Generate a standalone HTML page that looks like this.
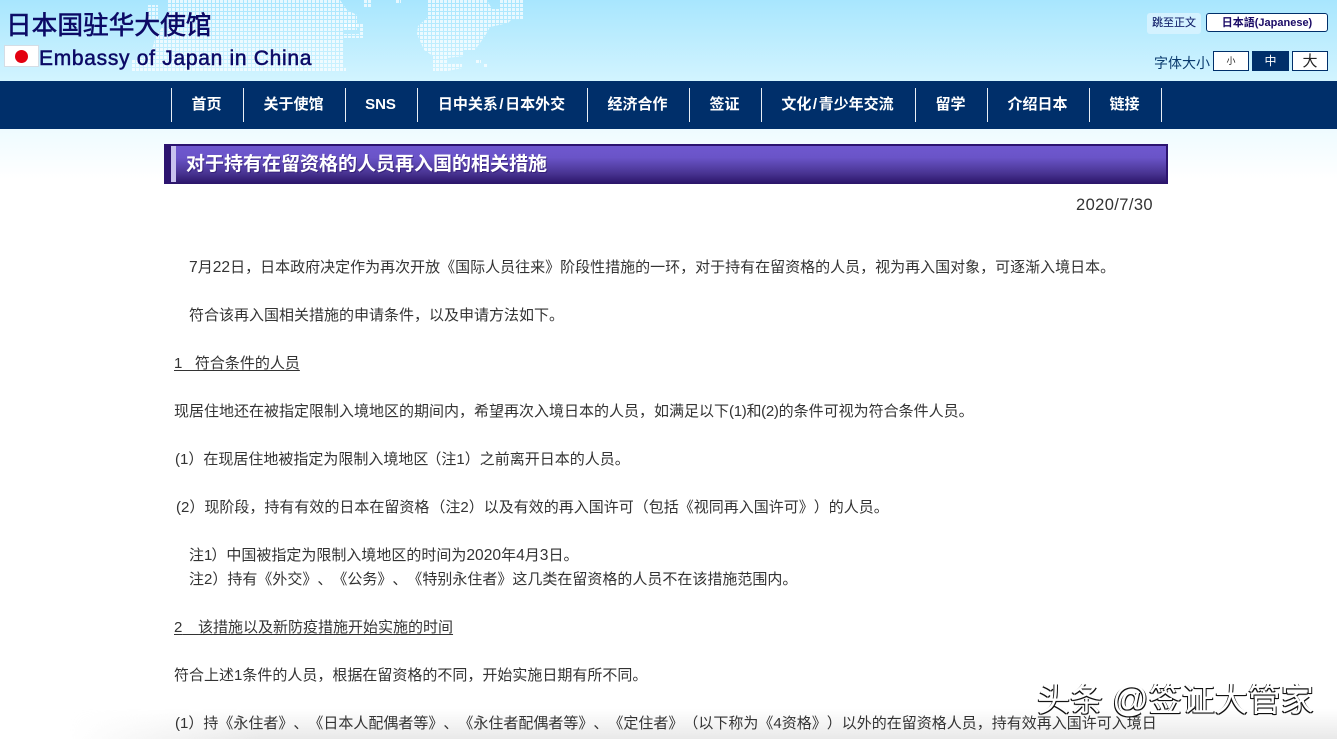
<!DOCTYPE html>
<html lang="zh"><head><meta charset="utf-8"><title>对于持有在留资格的人员再入国的相关措施</title>
<style>
html,body{margin:0;padding:0;background:#fff}
body{position:relative;width:1337px;height:739px;overflow:hidden;font-family:"Liberation Sans","Noto Sans CJK SC",sans-serif;color:#333;text-spacing-trim:space-all;font-feature-settings:"chws" 0}
.a{position:absolute;white-space:nowrap}
#hd{left:0;top:0;width:1337px;height:81px;background:linear-gradient(#a8e6fe,#d2f4ff)}
#nav{left:0;top:81px;width:1337px;height:48px;background:#002f6a}
#nav i{position:absolute;top:7px;width:1px;height:34px;background:#e8eef5}
#nav b{position:absolute;top:13px;height:22px;line-height:22px;color:#fff;font-size:15px;font-weight:bold;text-align:center;white-space:nowrap}
#nav u{text-decoration:none;padding:0 1.5px}
#fade{left:0;top:129px;width:1337px;height:50px;background:linear-gradient(#eefbff,#fff)}
.t{left:174px;font-size:15px;line-height:24px;height:24px;color:#333}
.u{text-decoration:underline;text-underline-offset:2px}
.o{padding-left:1px}
.d{font-size:15.6px}
.btn{background:#fff;border:1px solid #002f6a;box-sizing:border-box;text-align:center}
</style></head><body>
<div class="a" id="hd"></div>
<svg class="a" style="left:0;top:0" width="1337" height="81" viewBox="0 0 1337 81">
<defs><pattern id="d" width="4" height="4" patternUnits="userSpaceOnUse"><rect width="3" height="3" fill="#fff" fill-opacity=".72"/></pattern></defs>
<path fill="url(#d)" d="M167 0H340L347 10L357 15V30H343V68H346V71H132V60L150 56L156 36L166 22L167 12Z"/>
<path fill="url(#d)" d="M147 5H158V20H147Z"/>
<path fill="url(#d)" d="M344 23H363V38H344V34H359V28H344Z"/>
<path fill="url(#d)" d="M363 0H371V7H363ZM396 0H401V3H396Z"/>
<path fill="url(#d)" d="M427 0H487L492 9H500V0H523V20H511L508 23L490 27L485 36L475 50H464V56L447 58V64H462V68L448 71H433V56L424 50L417 34L418 26L427 18Z"/>
<path fill="url(#d)" d="M475 60H481V64H475ZM484 64H488V68H484Z"/>
</svg>
<div class="a" style="left:6px;top:11px;font-size:25.7px;line-height:30px;color:#0c0a66;-webkit-text-stroke:.6px #0c0a66">日本国驻华大使馆</div>
<div class="a" style="left:4px;top:45px;width:35px;height:22px;background:#fff;border:1px solid #d5dde5;box-sizing:border-box"></div>
<div class="a" style="left:15px;top:50px;width:13px;height:13px;border-radius:50%;background:#e30010"></div>
<div class="a" style="left:39px;top:46px;font-size:21px;letter-spacing:.7px;line-height:26px;color:#0c0a66;-webkit-text-stroke:.5px #0c0a66">Embassy of Japan in China</div>
<div class="a" style="left:1147px;top:13px;width:54px;height:21px;background:#d4f2ff;border-radius:3px;font-size:11px;line-height:21px;text-align:center;color:#0c1a66;-webkit-text-stroke:.1px #0c1a66">跳至正文</div>
<div class="a" style="left:1206px;top:13px;width:122px;height:19px;background:#fff;border:1px solid #002f6a;border-radius:3px;box-sizing:border-box;font-size:11px;line-height:18px;text-align:center;color:#1a0a66;font-weight:bold">日本語(Japanese)</div>
<div class="a" style="left:1154px;top:53px;font-size:14px;line-height:20px;color:#0a3a6e">字体大小</div>
<div class="a btn" style="left:1213px;top:51px;width:36px;height:20px;font-size:9px;line-height:19px;color:#222">小</div>
<div class="a btn" style="left:1252px;top:51px;width:37px;height:20px;background:#002f6a;color:#fff;font-size:12px;line-height:18px">中</div>
<div class="a btn" style="left:1292px;top:51px;width:36px;height:20px;font-size:15px;line-height:19px;color:#222">大</div>
<div class="a" id="nav">
<i style="left:171px"></i><i style="left:243px"></i><i style="left:345px"></i><i style="left:417px"></i><i style="left:587px"></i><i style="left:689px"></i><i style="left:761px"></i><i style="left:915px"></i><i style="left:987px"></i><i style="left:1089px"></i><i style="left:1161px"></i>
<b style="left:171px;width:71px">首页</b><b style="left:243px;width:101px">关于使馆</b><b style="left:345px;width:71px">SNS</b><b style="left:417px;width:169px">日中关系<u>/</u>日本外交</b><b style="left:587px;width:101px">经济合作</b><b style="left:689px;width:71px">签证</b><b style="left:761px;width:153px">文化<u>/</u>青少年交流</b><b style="left:915px;width:71px">留学</b><b style="left:987px;width:101px">介绍日本</b><b style="left:1089px;width:71px">链接</b>
</div>
<div class="a" id="fade"></div>
<div class="a" style="left:164px;top:144px;width:1004px;height:40px;box-sizing:border-box;border:2px solid #2c1470;border-bottom:0;background:linear-gradient(#6f58cf 0,#6a54c8 30%,#4a3594 70%,#2a1468 100%)"></div>
<div class="a" style="left:164px;top:144px;width:7px;height:40px;background:#2c1470"></div>
<div class="a" style="left:171px;top:146px;width:5px;height:36px;background:#c8c2ee"></div>
<div class="a" style="left:186px;top:152px;font-size:19px;line-height:26px;font-weight:bold;color:#fff;text-shadow:1px 1px 0 rgba(42,20,104,.6)">对于持有在留资格的人员再入国的相关措施</div>
<div class="a" style="left:1076px;top:195px;font-size:16.5px;letter-spacing:.4px;line-height:20px;color:#333">2020/7/30</div>
<div class="a" style="left:0;top:709px;width:1337px;height:30px;background:linear-gradient(rgba(225,225,225,0),rgba(225,225,225,.75));-webkit-mask-image:linear-gradient(90deg,transparent 70px,#000 260px,#000 100%)"></div>
<div class="a t" style="left:189px;top:256px"><span class="d">7</span>月<span class="d">22</span>日，日本政府决定作为再次开放《国际人员往来》阶段性措施的一环，对于持有在留资格的人员，视为再入国对象，可逐渐入境日本。</div>
<div class="a t" style="left:189px;top:304px">符合该再入国相关措施的申请条件，以及申请方法如下。</div>
<div class="a t u" style="top:352px">1&nbsp;&nbsp;&nbsp;符合条件的人员</div>
<div class="a t" style="top:400px">现居住地还在被指定限制入境地区的期间内，希望再次入境日本的人员，如满足以下<span style="letter-spacing:-.3px">(1)和(2)</span>的条件可视为符合条件人员。</div>
<div class="a t" style="top:448px"><span class="o">(</span>1）在现居住地被指定为限制入境地区<span style="margin-left:-2px">（</span>注1）之前离开日本的人员。</div>
<div class="a t" style="top:496px"><span class="o" style="padding-left:2px">(</span>2）现阶段，持有有效的日本在留资格<span style="margin-left:1px">（</span>注2）以及有效的再入国许可（包括《视同再入国许可》）的人员。</div>
<div class="a t" style="left:189px;top:544px">注<span style="letter-spacing:-1px">1</span>）中国被指定为限制入境地区的时间为<span class="d">2020</span>年<span class="d">4</span>月<span class="d">3</span>日。</div>
<div class="a t" style="left:189px;top:568px">注2）持有《外交》、《公务》、《特别永住者》这几类在留资格的人员不在该措施范围内。</div>
<div class="a t u" style="top:616px">2<span style="letter-spacing:-.25px">&nbsp;&nbsp;&nbsp;&nbsp;</span>该措施以及新防疫措施开始实施的时间</div>
<div class="a t" style="top:664px">符合上述1条件的人员，根据在留资格的不同，开始实施日期有所不同。</div>
<div class="a t" style="top:712px"><span class="o">(</span>1）持《永住者》、《日本人配偶者等》、《永住者配偶者等》、《定住者》（以下称为《4资格》）以外的在留资格人员，持有效再入国许可入境日</div>
<div class="a" style="left:1037px;top:677px;font-size:33px;line-height:44px;color:#fff;text-shadow:-1px 1px 0 #111,1px 1px 0 #111,0 1px 1px #222">头条 <span style="font-size:36px">@</span>签证大管家</div>
</body></html>
